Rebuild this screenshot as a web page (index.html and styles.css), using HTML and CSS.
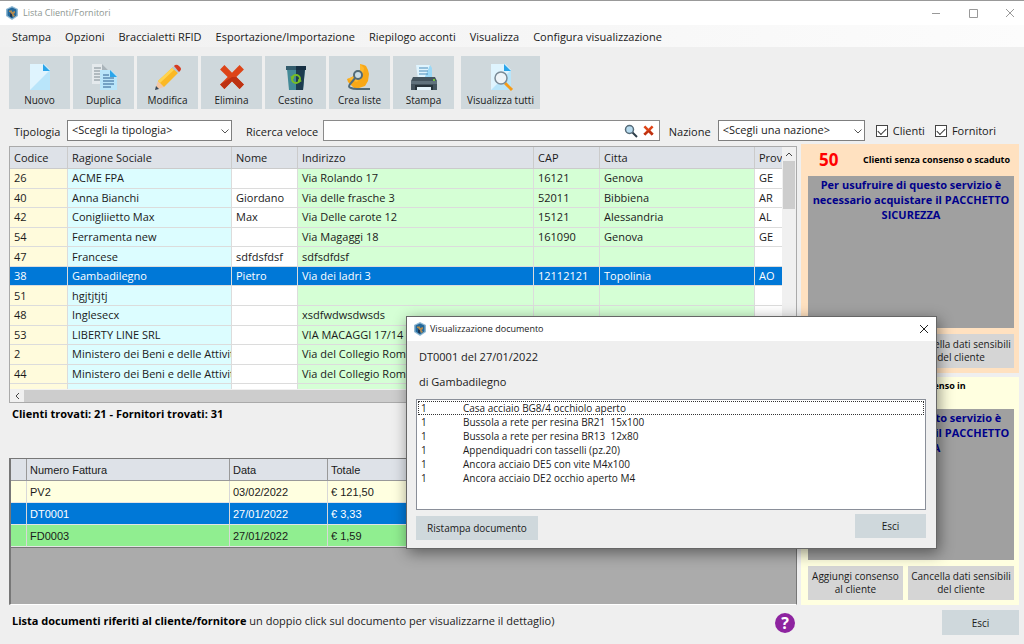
FILE: index.html
```html
<!DOCTYPE html>
<html lang="it">
<head>
<meta charset="utf-8">
<title>Lista Clienti/Fornitori</title>
<link rel="stylesheet" href="styles.css">
</head>
<body>
<svg class="defs" aria-hidden="true">
  <symbol id="logo" viewBox="0 0 12 14">
    <path d="M6 0l6 3v7l-6 4-6-4V3z" fill="#8fb8d2"/>
    <path d="M6 1.500l4.500 2v6L6 12.500l-4.500-3v-6z" fill="#23689b"/>
    <path d="M3 4.500h3v1.500l3-1v2l-1.500 1L9 10l-2 1-1-2.500L4.500 10V6H3z" fill="#b58a4c"/>
    <path d="M4 7l2 1v3.500l-2-1z" fill="#1c3552"/>
  </symbol>
  <symbol id="cross" viewBox="0 0 24 24">
    <path d="M1 5l4-4 7 7 7-7 4 4-7 7 7 7-4 4-7-7-7 7-4-4 7-7z" fill="#dd4418"/>
    <path d="M12 12l4 0 7 7-4 4-7-7-7 7-4-4z" fill="#bd3212"/>
  </symbol>
  <symbol id="chevron" viewBox="0 0 8 5"><path d="M.5.500L4 4 7.500.500" fill="none" stroke="#555"/></symbol>
</svg>

<header class="titlebar">
  <svg class="logo"><use href="#logo"/></svg>
  <h1 class="title">Lista Clienti/Fornitori</h1>
  <button class="winbtn" aria-label="Riduci"><svg viewBox="0 0 10 10"><path d="M1 5.500h8"/></svg></button>
  <button class="winbtn" aria-label="Ingrandisci"><svg viewBox="0 0 10 10"><path d="M1.500 1.500h8v8h-8z"/></svg></button>
  <button class="winbtn" aria-label="Chiudi"><svg viewBox="0 0 10 10"><path d="M1 1l8 8M9 1l-8 8"/></svg></button>
</header>

<nav class="menubar">
  <button>Stampa</button>
  <button>Opzioni</button>
  <button>Braccialetti RFID</button>
  <button>Esportazione/Importazione</button>
  <button>Riepilogo acconti</button>
  <button>Visualizza</button>
  <button>Configura visualizzazione</button>
</nav>

<div class="toolbar">
  <button class="tool"><svg viewBox="0 0 28 28"><path d="M4 1h14l6 6v20H4z" fill="#b9e5fa"/><path d="M4 1h14l6 6L4 27z" fill="#dff4fe"/><path d="M17 1l7 7h-7z" fill="#2ba5ea"/></svg>Nuovo</button>
  <button class="tool"><svg viewBox="0 0 28 28"><path d="M2 1h10l6 6v14H2z" fill="#e4e9ec"/><path d="M12 1l6 6h-6z" fill="#aab4ba"/><path d="M4 5h7M4 8h8M4 11h8M4 14h8M4 17h8" stroke="#7e8b92"/><path d="M10 7h11l6 6v14H10z" fill="#b9e5fa"/><path d="M20 7l7 7h-7z" fill="#2ba5ea"/><path d="M13 12h6M13 15h11M13 18h11M13 21h11M13 24h8" stroke="#2f5f8f"/></svg>Duplica</button>
  <button class="tool"><svg viewBox="0 0 28 28"><path d="M1 27l3-9 6 6z" fill="#f4c6a4"/><path d="M1 27l1-4 3 3z" fill="#32495c"/><path d="M4 18L19 4l5 6-14 14z" fill="#fbb825"/><path d="M4 18L19 4l2 2L6 20z" fill="#ffd44f"/><path d="M18 5l2-2 6 5-2 2z" fill="#b8c6ce"/><path d="M20 3l1-1q2-1 4 1l1 1q2 2 0 4l-1 1z" fill="#d63b20"/></svg>Modifica</button>
  <button class="tool"><svg class="pad"><use href="#cross"/></svg>Elimina</button>
  <button class="tool"><svg viewBox="0 0 28 28"><path d="M5 6h18l-2 21H7z" fill="#438a97"/><path d="M14 6h9l-2 21h-7z" fill="#1d3c50"/><path d="M4 3h20v4H4z" fill="#335c6d"/><path d="M14 3h10v4H14z" fill="#162f42"/><circle cx="14" cy="16" r="4" fill="none" stroke="#77bd24" stroke-width="2"/><path d="M8 14l4-2v4zM20 18l-4-2v4z" fill="#77bd24"/></svg>Cestino</button>
  <button class="tool"><svg viewBox="0 0 28 28"><path d="M14 1l4 1 2 1 2 4 1 4-1 7-3 5-6 2H8l-6-6-1-3 5-2 5-5 3-2z" fill="#f8a817"/><path d="M14 1l4 4-1 6-6 8-9-3 6-3 6-5z" fill="#ffb92e"/><path d="M10 14L5 20q-4 4 0 5 2 1 6 1h13" fill="none" stroke="#526b78" stroke-width="2"/><circle cx="12" cy="12" r="4" fill="#c8dce5" stroke="#526b78" stroke-width="2"/></svg>Crea liste</button>
  <button class="tool"><svg viewBox="0 0 28 28"><path d="M6 2h14v14H8z" fill="#dff4fe"/><path d="M20 2l2 3v11h-8z" fill="#9bd8f6"/><path d="M9 5h9M9 8h9M9 11h9" stroke="#4b8bb8"/><path d="M3 14h22l2 4v9H1v-9z" fill="#44545e"/><path d="M1 18h26v3H1z" fill="#60727d"/><path d="M5 22h18v5H5z" fill="#26333b"/><path d="M7 24h14v3H7z" fill="#e5f5fc"/><path d="M23 16h2v2h-2z" fill="#72c43a"/></svg>Stampa</button>
  <button class="tool tool-wide"><svg viewBox="0 0 28 28"><path d="M4 1h14l6 6v20H4z" fill="#b9e5fa"/><path d="M4 1h14l6 6L4 27z" fill="#dff4fe"/><path d="M17 1l7 7h-7z" fill="#2ba5ea"/><path d="M18 20l7 7" stroke="#f59b18" stroke-width="3"/><circle cx="14" cy="15" r="6" fill="#eef4f8" stroke="#7a8a96" stroke-width="1.500"/></svg>Visualizza tutti</button>
</div>

<form class="filters">
  <label class="lbl" for="tipo">Tipologia</label>
  <span class="combo combo-type"><select id="tipo"><option>&lt;Scegli la tipologia&gt;</option></select><svg><use href="#chevron"/></svg></span>
  <label class="lbl lbl-search" for="cerca">Ricerca veloce</label>
  <span class="search">
    <input id="cerca" type="text">
    <button type="button" aria-label="Cerca"><svg viewBox="0 0 14 14"><path d="M8 8l5 5" stroke="#2d3e49" stroke-width="2"/><circle cx="5.500" cy="5.500" r="4" fill="#b8dcf0" stroke="#566b78" stroke-width="1.500"/></svg></button>
    <button type="button" aria-label="Svuota"><svg class="small"><use href="#cross"/></svg></button>
  </span>
  <label class="lbl lbl-nation" for="naz">Nazione</label>
  <span class="combo combo-nation"><select id="naz"><option>&lt;Scegli una nazione&gt;</option></select><svg><use href="#chevron"/></svg></span>
  <label class="check"><input type="checkbox" checked>Clienti</label>
  <label class="check"><input type="checkbox" checked>Fornitori</label>
</form>

<main class="content">
  <section class="left">
    <div class="grid">
      <div class="grid-body">
        <div class="grid-clip">
          <table class="customers">
            <colgroup><col class="c-code"><col class="c-name"><col class="c-first"><col><col class="c-cap"><col class="c-city"><col class="c-prov"></colgroup>
            <thead><tr><th>Codice</th><th>Ragione Sociale</th><th>Nome</th><th>Indirizzo</th><th>CAP</th><th>Citta</th><th>Prov</th></tr></thead>
            <tbody>
              <tr><td>26</td><td>ACME FPA</td><td></td><td>Via Rolando 17</td><td>16121</td><td>Genova</td><td>GE</td></tr>
              <tr><td>40</td><td>Anna Bianchi</td><td>Giordano</td><td>Via delle frasche 3</td><td>52011</td><td>Bibbiena</td><td>AR</td></tr>
              <tr><td>42</td><td>Conigliietto Max</td><td>Max</td><td>Via Delle carote 12</td><td>15121</td><td>Alessandria</td><td>AL</td></tr>
              <tr><td>54</td><td>Ferramenta new</td><td></td><td>Via Magaggi 18</td><td>161090</td><td>Genova</td><td>GE</td></tr>
              <tr><td>47</td><td>Francese</td><td>sdfdsfdsf</td><td>sdfsdfdsf</td><td></td><td></td><td></td></tr>
              <tr class="selected"><td>38</td><td>Gambadilegno</td><td>Pietro</td><td>Via dei ladri 3</td><td>12112121</td><td>Topolinia</td><td>AO</td></tr>
              <tr><td>51</td><td>hgjtjtjtj</td><td></td><td></td><td></td><td></td><td></td></tr>
              <tr><td>48</td><td>Inglesecx</td><td></td><td>xsdfwdwsdwsds</td><td></td><td></td><td></td></tr>
              <tr><td>53</td><td>LIBERTY LINE SRL</td><td></td><td>VIA MACAGGI 17/14</td><td></td><td></td><td></td></tr>
              <tr><td>2</td><td>Ministero dei Beni e delle Attivit</td><td></td><td>Via del Collegio Romano</td><td></td><td></td><td></td></tr>
              <tr><td>44</td><td>Ministero dei Beni e delle Attivit</td><td></td><td>Via del Collegio Romano</td><td></td><td></td><td></td></tr>
              <tr><td>&nbsp;</td><td></td><td></td><td></td><td></td><td></td><td></td></tr>
            </tbody>
          </table>
        </div>
        <div class="vscroll"><svg class="arrow" viewBox="0 0 8 8"><path d="M1 6l3-3 3 3"/></svg><span class="thumb"></span></div>
      </div>
      <div class="hscroll"><svg class="arrow" viewBox="0 0 8 8"><path d="M6 1L3 4l3 3"/></svg><span class="thumb"></span></div>
    </div>
    <p class="count">Clienti trovati: 21 - Fornitori trovati: 31</p>
    <div class="docs">
      <table class="invoices">
        <colgroup><col class="i-mark"><col class="i-num"><col class="i-date"><col></colgroup>
        <thead><tr><th></th><th>Numero Fattura</th><th>Data</th><th>Totale</th></tr></thead>
        <tbody>
          <tr class="cream"><td></td><td>PV2</td><td>03/02/2022</td><td>€ 121,50</td></tr>
          <tr class="selected"><td></td><td>DT0001</td><td>27/01/2022</td><td>€ 3,33</td></tr>
          <tr class="green"><td></td><td>FD0003</td><td>27/01/2022</td><td>€ 1,59</td></tr>
        </tbody>
      </table>
    </div>
  </section>

  <aside class="right">
    <section class="panel expired">
      <div class="panel-head"><strong>50</strong><h2>Clienti senza consenso o scaduto</h2></div>
      <p class="notice">Per usufruire di questo servizio è necessario acquistare il PACCHETTO SICUREZZA</p>
      <div class="panel-actions"><button>Aggiungi consenso<br>al cliente</button><button>Cancella dati sensibili<br>del cliente</button></div>
    </section>
    <section class="panel expiring">
      <div class="panel-head"><strong>0</strong><h2>Clienti con consenso in<br>scadenza</h2></div>
      <p class="notice">Per usufruire di questo servizio è necessario acquistare il PACCHETTO SICUREZZA</p>
      <div class="panel-actions"><button>Aggiungi consenso<br>al cliente</button><button>Cancella dati sensibili<br>del cliente</button></div>
    </section>
  </aside>
</main>

<footer class="footer">
  <p><b>Lista documenti riferiti al cliente/fornitore</b> <span>un doppio click sul documento per visualizzarne il dettaglio)</span></p>
  <button class="help" aria-label="Aiuto">?</button>
  <button class="btn btn-exit">Esci</button>
</footer>

<div class="dialog" role="dialog" aria-labelledby="dlg-title">
  <header class="dialog-head">
    <svg class="logo"><use href="#logo"/></svg>
    <h2 id="dlg-title">Visualizzazione documento</h2>
    <button class="winbtn dark" aria-label="Chiudi"><svg viewBox="0 0 10 10"><path d="M1 1l8 8M9 1l-8 8"/></svg></button>
  </header>
  <div class="dialog-body">
    <p>DT0001 del 27/01/2022</p>
    <p>di Gambadilegno</p>
    <ul class="lines">
      <li class="focused"><span>1</span>Casa acciaio BG8/4 occhiolo aperto</li>
      <li><span>1</span>Bussola a rete per resina BR21&nbsp; 15x100</li>
      <li><span>1</span>Bussola a rete per resina BR13&nbsp; 12x80</li>
      <li><span>1</span>Appendiquadri con tasselli (pz.20)</li>
      <li><span>1</span>Ancora acciaio DE5 con vite M4x100</li>
      <li><span>1</span>Ancora acciaio DE2 occhio aperto M4</li>
    </ul>
    <div class="dialog-actions"><button class="btn btn-print">Ristampa documento</button><button class="btn btn-close">Esci</button></div>
  </div>
</div>
</body>
</html>
```

FILE: styles.css
```css
* { box-sizing: border-box; }

body {
  margin: 0;
  min-height: 100vh;
  display: flex;
  flex-direction: column;
  background: #efefef;
  color: #1a1a1a;
  font: 11px/16px "Open Sans", "Noto Sans", sans-serif;
  position: relative;
}

h1, h2, p, ul { margin: 0; padding: 0; font-size: inherit; font-weight: inherit; }
ul { list-style: none; }
button, input, select { font: inherit; color: inherit; border: 0; padding: 0; margin: 0; background: none; border-radius: 0; }
table { border-collapse: separate; border-spacing: 0; table-layout: fixed; width: 100%; }
th { text-align: left; font-weight: 400; }
svg { display: block; flex: none; }
.defs { position: absolute; width: 0; height: 0; }
.logo { width: 12px; height: 14px; }

/* Window title */
.titlebar {
  display: flex;
  align-items: center;
  height: 25px;
  padding: 0 7px 0 6px;
  background: #fff;
  border-top: 1px solid #999;
}
.title { flex: 1; margin-left: 5px; color: #8d9691; font-size: 9px; }
.winbtn { width: 14px; height: 14px; margin-left: 23px; display: grid; place-items: center; }
.winbtn svg { width: 10px; height: 10px; fill: none; stroke: #999; }
.winbtn.dark svg { stroke: #222; }

/* Menu */
.menubar {
  display: flex;
  gap: 14px;
  height: 22px;
  padding: 1px 12px 0;
  background: linear-gradient(90deg, #f0f0f0, #fcfcfc);
}

/* Toolbar */
.toolbar { display: flex; gap: 3px; padding: 9px 9px 11px; }
.tool {
  width: 61px;
  height: 53px;
  padding-top: 7px;
  display: flex;
  flex-direction: column;
  align-items: center;
  background: #cfd8dc;
  font-size: 10px;
  line-height: 18px;
}
.tool svg { width: 28px; height: 28px; }
.tool .pad { padding: 1px; }
.tool-wide { width: 79px; margin-left: 4px; }

/* Filters */
.filters { display: flex; align-items: center; padding: 0 28px 3px 14px; height: 24px; }
.lbl { width: 53px; white-space: nowrap; padding-top: 2px; }
.lbl-search { width: 77px; margin-left: 14px; }
.lbl-nation { width: 49px; margin-left: 9px; }
.combo { position: relative; height: 21px; }
.combo-type { width: 165px; }
.combo-nation { width: 147px; margin-right: 11px; }
.combo select {
  appearance: none;
  width: 100%;
  height: 100%;
  padding: 0 16px 2px 4px;
  background: #fff;
  border: 1px solid #7f7f7f;
}
.combo svg { position: absolute; right: 3px; top: 9px; width: 8px; height: 5px; pointer-events: none; }
.search { flex: 1; display: flex; align-items: center; height: 21px; background: #fff; border: 1px solid #8a8a8a; padding-right: 1px; }
.search input { flex: 1; min-width: 0; height: 100%; }
.search button { width: 18px; display: grid; place-items: center; }
.search svg { width: 14px; height: 14px; }
.search .small { width: 11px; height: 11px; }
.check { display: flex; align-items: center; gap: 5px; white-space: nowrap; }
.check + .check { margin-left: 10px; }
.check input { appearance: none; width: 12px; height: 12px; border: 1px solid #444; background: #fff; display: grid; place-items: center; }
.check input:checked::before {
  content: "";
  width: 7px;
  height: 4px;
  border: solid #333;
  border-width: 0 0 1px 1px;
  transform: rotate(-45deg);
}

/* Main area */
.content { flex: 1; display: flex; gap: 4px; padding: 0 5px 0 9px; }
.left { flex: 1; min-width: 0; display: flex; flex-direction: column; padding-top: 2px; }
.grid { border: 1px solid #aaa; background: #f0f0f0; }
.grid-body { display: flex; height: 242px; }
.grid-clip { flex: 1; min-width: 0; overflow: hidden; background: #fff; }
.customers { height: 257px; }
.customers th, .customers td {
  padding: 0 0 0 4px;
  border-right: 1px solid #dcdcdc;
  border-bottom: 1px solid #dcdcdc;
  white-space: nowrap;
  overflow: hidden;
  line-height: 18px;
}
.customers th { height: 22px; background: #dee2e8; border-color: #cbcbcb; }
.customers th:last-child, .customers td:last-child { border-right: 0; }
.customers td { background: #fff; }
.customers td:nth-child(1) { background: #fffbdc; }
.customers td:nth-child(2) { background: #dcfdff; }
.customers td:nth-child(4), .customers td:nth-child(5), .customers td:nth-child(6) { background: #d5ffd5; }
.c-code { width: 58px; }
.c-name { width: 164px; }
.c-first { width: 66px; }
.c-cap { width: 66px; }
.c-city { width: 155px; }
.c-prov { width: 27px; }
.customers .selected td:nth-child(n), .invoices .selected td { background: #0078d7; color: #fff; }

.vscroll { width: 14px; padding: 0 1px; display: flex; flex-direction: column; align-items: center; }
.arrow { width: 8px; height: 14px; fill: none; stroke: #444; stroke-width: 1; }
.vscroll .thumb { width: 12px; height: 48px; background: #cdcdcd; }
.hscroll { display: flex; align-items: center; height: 13px; padding: 0 14px 0 3px; gap: 3px; }
.hscroll .thumb { width: 520px; height: 12px; background: #cdcdcd; }

.count { padding: 3px 3px 36px; font-weight: 700; color: #000; }

.docs { flex: 1; background: #ababab; border: 1px solid #777; border-width: 1px 1px 1px 2px; border-bottom-color: #fff; }
.invoices { font-family: "Liberation Sans", Arial, sans-serif; border-bottom: 1px solid #777; }
.invoices th, .invoices td { height: 22px; padding: 0 0 0 3px; border-right: 1px solid #d8d8d8; border-bottom: 1px solid #e4e4e4; }
.invoices th { background: #dee2e8; border-color: #999; }
.i-mark { width: 16px; }
.i-num { width: 203px; }
.i-date { width: 98px; }
.cream td { background: #ffffe0; }
.green td { background: #90ee90; }

/* Consent panels */
.right { width: 218px; display: flex; flex-direction: column; gap: 4px; }
.panel { flex: 1; display: flex; flex-direction: column; padding: 0 5px 5px 7px; }
.expired { background: #ffe1c0; }
.expiring { background: #ffffe0; }
.panel-head { display: flex; height: 32px; align-items: center; }
.panel-head strong { width: 55px; padding-left: 11px; color: #f00; font-size: 17px; }
.panel-head h2 { flex: 1; color: #000; font-size: 9px; line-height: 14px; font-weight: 700; white-space: nowrap; }
.expiring .panel-head strong { visibility: hidden; }
.notice { flex: 1; background: #a0a0a0; color: #00008b; font-weight: 700; text-align: center; line-height: 15px; padding-top: 1px; }
.panel-actions { display: flex; gap: 5px; padding-top: 6px; }
.panel-actions button { flex: 1 1 95px; height: 34px; background: #d5d5d5; font-size: 10px; line-height: 13px; white-space: nowrap; }
.panel-actions button + button { flex-basis: 106px; }

/* Footer */
.footer { display: flex; align-items: center; height: 39px; padding: 0 5px 4px 12px; }
.footer p { flex: 1; color: #222; padding-bottom: 3px; }
.footer b { color: #000; }
.help { width: 20px; height: 20px; margin-right: 147px; border-radius: 50%; background: #8e24a0; color: #fff; font-weight: 700; font-size: 16px; line-height: 18px; }
.btn { background: #cfd8dc; }
.btn-exit { width: 77px; height: 25px; font-size: 10px; }

/* Document window */
.dialog {
  position: absolute;
  left: 406px;
  top: 316px;
  width: 531px;
  background: #efefef;
  border: 1px solid #666;
  box-shadow: 2px 4px 14px rgba(0, 0, 0, .45);
}
.dialog-head { display: flex; align-items: center; height: 24px; padding: 0 5px 0 7px; background: #fff; }
.dialog-head h2 { flex: 1; margin-left: 4px; font-size: 9px; }
.dialog-body { padding: 8px 10px 8px 9px; }
.dialog-body p { padding-left: 3px; margin-bottom: 9px; }
.lines { height: 111px; padding: 1px; background: #fff; border: 1px solid #8a8f99; }
.lines li { display: flex; height: 14px; padding-left: 2px; align-items: center; font-size: 10px; border: 1px solid transparent; }
.lines .focused { border: 1px dotted #333; }
.lines span { width: 42px; }
.dialog-actions { display: flex; justify-content: space-between; align-items: flex-start; padding-top: 4px; }
.dialog-actions .btn { height: 24px; font-size: 10px; }
.btn-print { width: 122px; margin-top: 2px; }
.btn-close { width: 71px; }
```
